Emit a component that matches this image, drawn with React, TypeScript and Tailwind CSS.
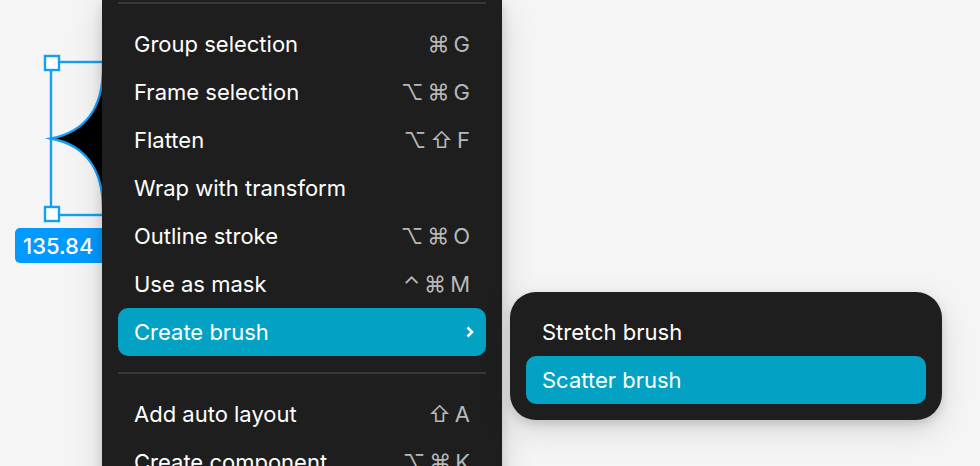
import React from "react";

type Item = { label: string; keys?: string[]; active?: boolean; submenu?: boolean };

const arrange: Item[] = [
  { label: "Group selection", keys: ["⌘", "G"] },
  { label: "Frame selection", keys: ["⌥", "⌘", "G"] },
  { label: "Flatten", keys: ["⌥", "⇧", "F"] },
  { label: "Wrap with transform" },
  { label: "Outline stroke", keys: ["⌥", "⌘", "O"] },
  { label: "Use as mask", keys: ["⌃", "⌘", "M"] },
  { label: "Create brush", active: true, submenu: true },
];

const layout: Item[] = [
  { label: "Add auto layout", keys: ["⇧", "A"] },
  { label: "Create component", keys: ["⌥", "⌘", "K"] },
];

const brushes: Item[] = [{ label: "Stretch brush" }, { label: "Scatter brush", active: true }];

function MenuItem({ item }: { item: Item }) {
  return (
    <button
      type="button"
      role="menuitem"
      aria-haspopup={item.submenu ? "menu" : undefined}
      className={`flex h-12 w-full shrink-0 items-center justify-between rounded-[10px] pl-4 text-left text-white ${
        item.submenu ? "pr-3" : "pr-4"
      } ${item.active ? "bg-[#03a2c5]" : ""}`}
    >
      <span>{item.label}</span>
      {item.keys && (
        <kbd className="flex gap-1 font-[Inter,'DejaVu_Sans',sans-serif] text-[#b8b8b8]">
          {item.keys.map((key) => (
            <span key={key}>{key}</span>
          ))}
        </kbd>
      )}
      {item.submenu && (
        <svg width="8" height="12" viewBox="0 0 8 12" fill="none" stroke="white" strokeWidth="2.6" aria-hidden="true">
          <path d="M1.500 1.500 6 6 1.500 10.500" />
        </svg>
      )}
    </button>
  );
}

function Divider() {
  return <div role="separator" className="h-[2px] shrink-0 bg-[#383838]" />;
}

function Selection() {
  return (
    <svg
      className="absolute top-[54px] left-[42px]"
      width="170"
      height="170"
      viewBox="42 54 170 170"
      fill="none"
      stroke="#129ff5"
      strokeWidth="2.4"
      aria-hidden="true"
    >
      <path
        d="M51 138.500C85 132 103 108 103 68V62H152V215H103V209C103 169 85 145 51 138.500Z"
        fill="black"
        strokeMiterlimit="10"
      />
      <rect x="51" y="62" width="153" height="153" />
      <rect x="45" y="56" width="14" height="14" fill="white" />
      <rect x="45" y="207" width="14" height="14" fill="white" />
    </svg>
  );
}

export default function App() {
  return (
    <main className="relative h-screen w-full overflow-hidden bg-[#f5f5f5] font-[Inter,sans-serif] text-[22px] leading-8">
      <Selection />
      <div className="absolute top-[228px] left-[15px] flex h-[35px] w-[224px] items-center rounded-[5px] bg-[#039aff] px-2 font-medium text-white">
        135.84
      </div>
      <div
        role="menu"
        aria-label="Object actions"
        className="absolute top-0 left-[102px] flex w-[400px] flex-col gap-4 bg-[#1e1e1e] px-4 pt-[2px] pb-4 shadow-[0_10px_32px_rgba(0,0,0,0.15),0_2px_10px_rgba(0,0,0,0.13)]"
      >
        <Divider />
        <div>
          {arrange.map((item) => (
            <MenuItem key={item.label} item={item} />
          ))}
        </div>
        <Divider />
        <div>
          {layout.map((item) => (
            <MenuItem key={item.label} item={item} />
          ))}
        </div>
      </div>
      <div
        role="menu"
        aria-label="Create brush"
        className="absolute top-[292px] left-[510px] w-[432px] rounded-[26px] bg-[#1e1e1e] p-4 shadow-[0_10px_32px_rgba(0,0,0,0.13),0_4px_10px_rgba(0,0,0,0.13)]"
      >
        {brushes.map((item) => (
          <MenuItem key={item.label} item={item} />
        ))}
      </div>
    </main>
  );
}
